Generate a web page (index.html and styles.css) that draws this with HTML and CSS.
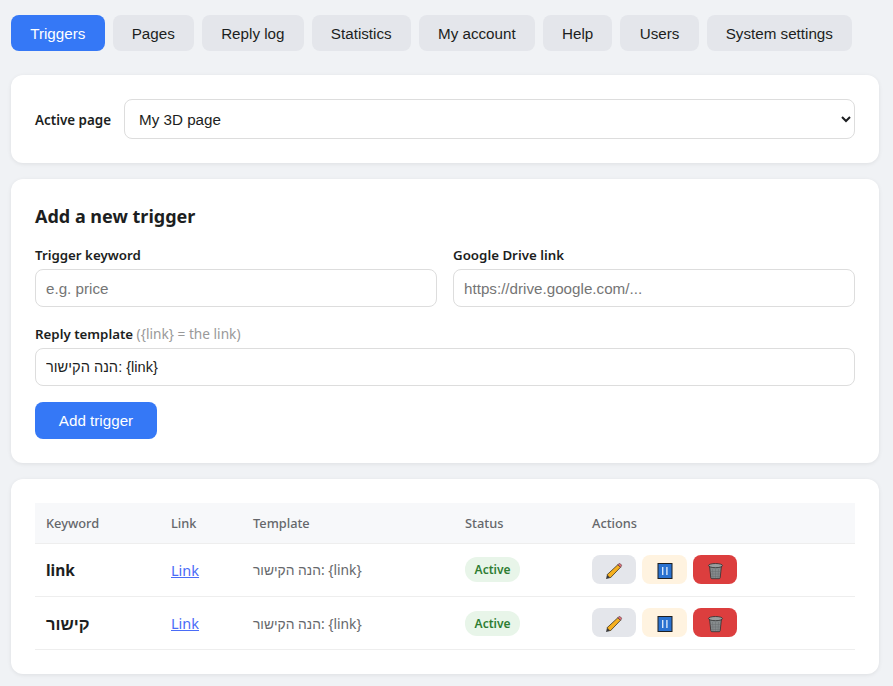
FILE: index.html
```html
<!DOCTYPE html>
<html lang="en">
<head>
    <meta charset="UTF-8">
    <meta name="viewport" content="width=device-width, initial-scale=1.0">
    <title>Triggers</title>
    <link rel="stylesheet" href="styles.css">
</head>
<body>
    <nav class="tabs">
        <button class="tab active">Triggers</button>
        <button class="tab">Pages</button>
        <button class="tab">Reply log</button>
        <button class="tab">Statistics</button>
        <button class="tab">My account</button>
        <button class="tab">Help</button>
        <button class="tab">Users</button>
        <button class="tab">System settings</button>
    </nav>

    <section class="card page-picker">
        <label class="label-inline" for="pageSelect">Active page</label>
        <select id="pageSelect" class="page-select">
            <option>My 3D page</option>
        </select>
    </section>

    <section class="card">
        <h2>Add a new trigger</h2>
        <div class="form-row">
            <div class="field">
                <label for="keyword">Trigger keyword</label>
                <input type="text" id="keyword" placeholder="e.g. price">
            </div>
            <div class="field">
                <label for="drive">Google Drive link</label>
                <input type="text" id="drive" placeholder="https://drive.google.com/...">
            </div>
        </div>
        <div class="field field-wide">
            <label for="template">Reply template <span class="hint">({link} = the link)</span></label>
            <input type="text" id="template" value="הנה הקישור: {link}">
        </div>
        <button class="btn-primary">Add trigger</button>
    </section>

    <section class="card">
        <table>
            <thead>
                <tr>
                    <th class="col-keyword">Keyword</th>
                    <th class="col-link">Link</th>
                    <th class="col-template">Template</th>
                    <th class="col-status">Status</th>
                    <th>Actions</th>
                </tr>
            </thead>
            <tbody>
                <tr>
                    <td class="keyword">link</td>
                    <td><a href="#">Link</a></td>
                    <td class="template">הנה הקישור: {link}</td>
                    <td><span class="badge">Active</span></td>
                    <td class="actions">
                        <button class="icon-btn edit"><svg width="18" height="18" viewBox="0 0 18 18"><use href="#pencil"/></svg></button>
                        <button class="icon-btn pause"><svg width="18" height="18" viewBox="0 0 18 18"><use href="#pause"/></svg></button>
                        <button class="icon-btn remove"><svg width="18" height="18" viewBox="0 0 18 18"><use href="#trash"/></svg></button>
                    </td>
                </tr>
                <tr>
                    <td class="keyword keyword-he">קישור</td>
                    <td><a href="#">Link</a></td>
                    <td class="template">הנה הקישור: {link}</td>
                    <td><span class="badge">Active</span></td>
                    <td class="actions">
                        <button class="icon-btn edit"><svg width="18" height="18" viewBox="0 0 18 18"><use href="#pencil"/></svg></button>
                        <button class="icon-btn pause"><svg width="18" height="18" viewBox="0 0 18 18"><use href="#pause"/></svg></button>
                        <button class="icon-btn remove"><svg width="18" height="18" viewBox="0 0 18 18"><use href="#trash"/></svg></button>
                    </td>
                </tr>
            </tbody>
        </table>
    </section>

    <svg class="icon-defs" width="0" height="0">
        <symbol id="pencil" viewBox="0 0 18 18">
            <path d="M1 17l1-4.2 3.2 3.2z" fill="#3a3a3a"/>
            <path d="M2 12.8L12.9 2.7l2.6 2.6L5.2 16z" fill="#f6b01e" stroke="#3f3320" stroke-width=".8"/>
            <path d="M12.9 2.7l1-.9c.5-.4 1-.4 1.4 0l1 1c.4.5.4 1 0 1.4l-.8 1.1z" fill="#e2707c" stroke="#4a3030" stroke-width=".6"/>
        </symbol>
        <symbol id="pause" viewBox="0 0 18 18">
            <rect x="2" y="1.5" width="14" height="15" fill="#2a72d0" stroke="#1f1f1f" stroke-width="1"/>
            <rect x="6" y="5" width="1.4" height="8" fill="#d7e6f8"/>
            <rect x="10.2" y="5" width="1.4" height="8" fill="#d7e6f8"/>
        </symbol>
        <symbol id="trash" viewBox="0 0 18 18">
            <path d="M3.6 4.5h11.8l-1.2 11.2c-.1.6-.5 1-1 1H5.8c-.5 0-.9-.4-1-1z" fill="#868b8d" stroke="#2e2e2e" stroke-width=".8"/>
            <ellipse cx="9.5" cy="3.6" rx="7" ry="2.1" fill="#9a9d9e" stroke="#2e2e2e" stroke-width=".8"/>
            <path d="M6.5 7l.5 9M9.5 7v9M12.5 7l-.5 9M4.5 9.5h10M4.8 12h9.4M5 14.5h9" stroke="#6a6e70" stroke-width=".5"/>
        </symbol>
    </svg>
</body>
</html>
```

FILE: styles.css
```css
* {
    box-sizing: border-box;
}
body {
    font-family: "Noto Sans", "Liberation Sans", sans-serif;
    margin: 0;
    padding: 15px 14px 12px 11px;
    background-color: #f0f2f5;
    color: #1c1e21;
}
.tabs {
    display: flex;
    gap: 8px;
    margin-bottom: 24px;
}
.tab {
    font-family: "Liberation Sans", sans-serif;
    font-size: 15.2px;
    height: 36px;
    padding: 0 19.2px;
    border: none;
    border-radius: 8px;
    background-color: #e4e6eb;
    color: #1c1e21;
}
.tab.active {
    background-color: #3578f6;
    color: white;
}
.card {
    background: white;
    padding: 24px;
    border-radius: 12px;
    box-shadow: 0 1px 4px rgba(0,0,0,0.08);
    margin-bottom: 16px;
}
.page-picker {
    display: flex;
    align-items: center;
    gap: 13px;
}
.label-inline {
    font-size: 13.4px;
    font-weight: 600;
    white-space: nowrap;
    padding-top: 2px;
}
.page-select {
    flex: 1;
    height: 40px;
    padding: 0 10px;
    font-family: "Liberation Sans", sans-serif;
    font-size: 15.2px;
    color: #1c1e21;
    background: white;
    border: 1px solid #ddd;
    border-radius: 8px;
}
h2 {
    font-size: 18px;
    line-height: 24px;
    font-weight: 700;
    margin: 1px 0 18px;
}
.form-row {
    display: grid;
    grid-template-columns: 1fr 1fr;
    gap: 16px;
}
.field label {
    display: block;
    font-size: 13.3px;
    font-weight: 600;
    line-height: 18px;
    margin-bottom: 5px;
}
.field input {
    display: block;
    width: 100%;
    height: 38px;
    padding: 0 10px;
    font-family: "Liberation Sans", sans-serif;
    font-size: 15.2px;
    color: #1c1e21;
    border: 1px solid #ddd;
    border-radius: 8px;
}
.field input::placeholder {
    color: #757575;
}
.field #template {
    font-size: 14.6px;
}
.field-wide {
    margin-top: 18px;
}
.hint {
    font-size: 13.7px;
    font-weight: 400;
    color: #999;
}
.btn-primary {
    display: block;
    margin-top: 16px;
    width: 122px;
    height: 37px;
    font-family: "Liberation Sans", sans-serif;
    font-size: 15.2px;
    color: white;
    background-color: #3578f6;
    border: none;
    border-radius: 8px;
}
table {
    width: 100%;
    border-collapse: collapse;
}
th {
    font-size: 12.8px;
    font-weight: 500;
    text-align: left;
    color: #65676b;
    background-color: #f7f8fa;
    height: 40px;
    padding: 0 11px;
    border-bottom: 1px solid #eee;
}
td {
    height: 53px;
    padding: 0 11px;
    font-size: 14px;
    border-bottom: 1px solid #eee;
}
.col-keyword {
    width: 125px;
}
.col-link {
    width: 82px;
}
.col-template {
    width: 212px;
}
.col-status {
    width: 127px;
}
.keyword {
    font-size: 15.5px;
    font-weight: 700;
}
.keyword-he {
    font-size: 16.5px;
}
td a {
    font-size: 14.5px;
    color: #4a6cf7;
}
.template {
    font-size: 13.8px;
    color: #65676b;
}
.badge {
    display: inline-block;
    padding: 4px 9.6px;
    font-size: 12px;
    font-weight: 600;
    color: #2e7d32;
    background-color: #e8f5e9;
    border-radius: 12px;
}
.actions {
    display: flex;
    align-items: center;
    gap: 6px;
}
.icon-btn {
    display: flex;
    align-items: center;
    justify-content: center;
    width: 44px;
    height: 29px;
    padding: 0;
    border: none;
    border-radius: 8px;
}
.icon-btn svg {
    margin-top: 3px;
}
.edit {
    background-color: #e4e6eb;
}
.pause {
    width: 45px;
    background-color: #fff3e0;
}
.remove {
    background-color: #dc3e3e;
}
.icon-defs {
    position: absolute;
}
```
